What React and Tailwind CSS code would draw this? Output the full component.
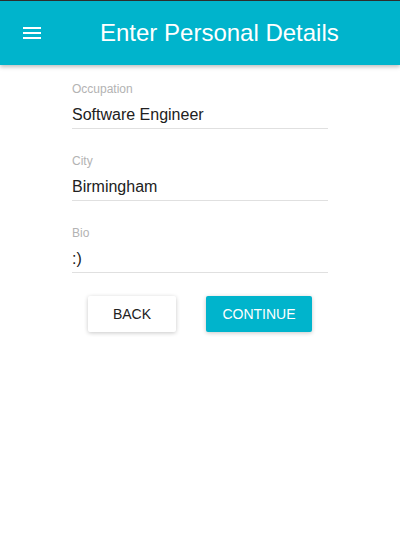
import React from "react";

function Field({ label, value }) {
  return (
    <div className="w-[256px] ml-[72px]">
      <div className="text-[12px] leading-[16px] text-[#b3b3b3]">{label}</div>
      <div className="mt-[6px] pb-[1px] text-[16px] leading-[24px] text-[#212121] border-b border-[#e0e0e0]">
        {value}
      </div>
    </div>
  );
}

export default function App() {
  return (
    <div
      className="w-[400px] h-[542px] bg-white relative overflow-hidden"
      style={{ fontFamily: '"Liberation Sans", Arial, sans-serif' }}
    >
      <div className="h-[1px] bg-[#2f2f2f]" />
      <div className="h-[64px] bg-[#00b4cc] flex items-center px-[20px] shadow-[0_2px_4px_rgba(0,0,0,0.25)] relative z-10">
        <svg width="24" height="24" viewBox="0 0 24 24" fill="white">
          <rect x="3" y="6" width="18" height="2" />
          <rect x="3" y="11" width="18" height="2" />
          <rect x="3" y="16" width="18" height="2" />
        </svg>
        <div className="ml-[56px] text-white text-[24px] leading-[32px]">
          Enter Personal Details
        </div>
      </div>
      <div className="pt-[16px] flex flex-col gap-[24px]">
        <Field label="Occupation" value="Software Engineer" />
        <Field label="City" value="Birmingham" />
        <Field label="Bio" value=":)" />
      </div>
      <div className="mt-[23px] flex justify-center gap-[30px]">
        <button className="w-[88px] h-[36px] bg-white text-[#212121] text-[14px] rounded-[2px] shadow-[0_1px_4px_rgba(0,0,0,0.22)]">
          BACK
        </button>
        <button className="w-[106px] h-[36px] bg-[#00b4cc] text-white text-[14px] rounded-[2px] shadow-[0_1px_4px_rgba(0,0,0,0.22)]">
          CONTINUE
        </button>
      </div>
    </div>
  );
}
